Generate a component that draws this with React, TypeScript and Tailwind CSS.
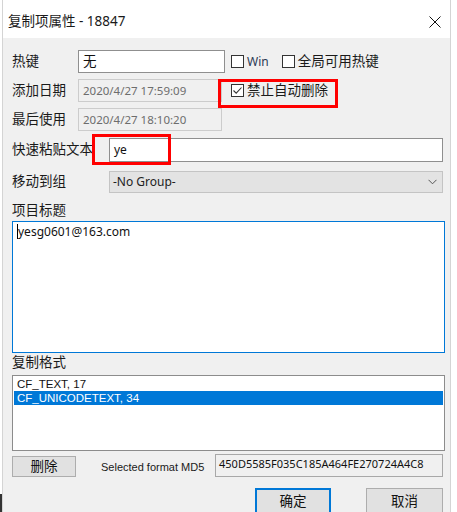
import React from 'react';

const font = { fontFamily: '"Noto Sans", "Noto Sans CJK SC", sans-serif' };

const Check: React.FC<{ checked?: boolean }> = ({ checked }) => (
  <span className="flex h-[13px] w-[13px] shrink-0 items-center justify-center border border-[#333333] bg-white">
    {checked && (
      <svg width="11" height="11" viewBox="0 0 11 11">
        <path d="M1.5 5.5 L4.2 8.2 L9.5 2.5" fill="none" stroke="#333" strokeWidth="1.1" />
      </svg>
    )}
  </span>
);

const Label: React.FC<{ w: string; children: React.ReactNode }> = ({ w, children }) => (
  <span className={`${w} shrink-0 text-[13.5px] leading-none text-[#1a1a1a]`}>{children}</span>
);

export default function App() {
  return (
    <div className="relative h-[512px] w-[457px] overflow-hidden bg-white" style={font}>
      <div className="ml-[2px] flex h-[540px] w-[449px] flex-col border-x border-[#d4d4d4]">
        {/* title bar */}
        <div className="flex h-[38px] shrink-0 items-center justify-between bg-white pl-[5px] pr-[8px] pt-[5px]">
          <span className="text-[13.5px] text-[#1a1a1a]">复制项属性 - 18847</span>
          <svg width="12" height="12" viewBox="0 0 12 12" className="mr-[1px]">
            <path d="M0.5 0.5 L11.5 11.5 M11.5 0.5 L0.5 11.5" stroke="#111" strokeWidth="1" />
          </svg>
        </div>

        <div className="flex flex-1 flex-col bg-[#f0f0f0] pl-[9px] pr-[7px]">
          {/* hotkey */}
          <div className="mt-[12px] flex h-[23px] items-center">
            <Label w="w-[66px]">热键</Label>
            <div className="flex h-[23px] w-[147px] items-center border border-[#8f8f8f] bg-white pl-[4px] text-[13.5px] text-[#111]">
              无
            </div>
            <div className="ml-[6px] flex items-center gap-[3px]">
              <Check />
              <span className="text-[12px] text-[#2b3a55]">Win</span>
            </div>
            <div className="ml-[13px] flex items-center gap-[3px]">
              <Check />
              <span className="text-[13.5px] text-[#1a1a1a]">全局可用热键</span>
            </div>
          </div>

          {/* added date */}
          <div className="mt-[6px] flex h-[23px] items-center">
            <Label w="w-[66px]">添加日期</Label>
            <div className="flex h-[23px] w-[144px] items-center border border-[#cccccc] bg-[#f0f0f0] pl-[4px] text-[11.5px] text-[#6d6d6d]">
              2020/4/27 17:59:09
            </div>
            <div className="ml-[9px] flex items-center gap-[3px]">
              <Check checked />
              <span className="text-[13.5px] text-[#1a1a1a]">禁止自动删除</span>
            </div>
          </div>

          {/* last used */}
          <div className="mt-[6px] flex h-[23px] items-center">
            <Label w="w-[66px]">最后使用</Label>
            <div className="flex h-[23px] w-[144px] items-center border border-[#cccccc] bg-[#f0f0f0] pl-[4px] text-[11.5px] text-[#6d6d6d]">
              2020/4/27 18:10:20
            </div>
          </div>

          {/* quick paste */}
          <div className="mt-[7px] flex h-[24px] items-center">
            <Label w="w-[97px]">快速粘贴文本</Label>
            <div className="flex h-[24px] flex-1 items-center border border-[#8f8f8f] bg-white pl-[4px] text-[12px] text-[#111]">
              ye
            </div>
          </div>

          {/* group */}
          <div className="mt-[9px] flex h-[22px] items-center">
            <Label w="w-[97px]">移动到组</Label>
            <div className="flex h-[22px] flex-1 items-center justify-between border border-[#c4c4c4] bg-[#e3e3e3] pl-[3px] pr-[5px] text-[12px] text-[#222]">
              <span>-No Group-</span>
              <svg width="9" height="6" viewBox="0 0 9 6">
                <path d="M0.5 0.8 L4.5 4.8 L8.5 0.8" fill="none" stroke="#555" strokeWidth="1" />
              </svg>
            </div>
          </div>

          <div className="mt-[9px] h-[16px] text-[13.5px] leading-[16px] text-[#1a1a1a]">项目标题</div>

          {/* title textarea */}
          <div className="mt-[3px] flex h-[132px] w-[433px] items-start border border-[#0078d7] bg-white pl-[4px] pt-[3px]">
            <span className="mt-[-1px] h-[15px] w-[1px] bg-black"></span>
            <span className="text-[12px] leading-[14px] text-[#111]">yesg0601@163.com</span>
          </div>

          <div className="mt-[1px] h-[16px] text-[13.5px] leading-[16px] text-[#1a1a1a]">复制格式</div>

          {/* format list */}
          <div
            className="mt-[5px] flex h-[76px] w-[433px] flex-col border border-[#8c8c8c] bg-white p-[1px] text-[11.5px] leading-[14px]"
            style={{ fontFamily: '"Liberation Sans", sans-serif' }}
          >
            <div className="flex h-[14px] items-center pl-[3px] text-[#111]">CF_TEXT, 17</div>
            <div className="flex h-[14px] items-center bg-[#0078d7] pl-[3px] text-white">CF_UNICODETEXT, 34</div>
          </div>

          {/* delete + md5 */}
          <div className="mt-[3px] flex h-[23px] items-start">
            <button className="mt-[2px] flex h-[21px] w-[64px] items-center justify-center border border-[#adadad] bg-[#e1e1e1] text-[13.5px] text-[#111]">
              删除
            </button>
            <span
              className="ml-[25px] mt-[6px] whitespace-nowrap text-[11px] leading-[14px] text-[#1a1a1a]"
              style={{ fontFamily: '"Liberation Sans", sans-serif' }}
            >
              Selected format MD5
            </span>
            <div className="ml-auto flex h-[23px] w-[228px] items-start whitespace-nowrap border border-[#a8a8a8] bg-[#f0f0f0] pl-[3px] pt-[1px] text-[11px] text-[#111]">
              450D5585F035C185A464FE270724A4C8
            </div>
          </div>

          {/* ok / cancel */}
          <div className="mt-[11px] flex items-start">
            <button className="ml-[243px] flex h-[26px] w-[76px] items-center justify-center border-2 border-[#0078d7] bg-[#e1e1e1] text-[13.5px] text-[#111]">
              确定
            </button>
            <button className="ml-auto flex h-[26px] w-[77px] items-center justify-center border border-[#adadad] bg-[#e1e1e1] text-[13.5px] text-[#111]">
              取消
            </button>
          </div>
        </div>
      </div>

      {/* annotation boxes */}
      <div className="absolute left-[218px] top-[79px] h-[29px] w-[120px] border-[3px] border-[#ff0000]"></div>
      <div className="absolute left-[92px] top-[134px] h-[31px] w-[79px] border-[3px] border-[#ff0000]"></div>
      <div className="absolute left-0 top-[494px] h-[18px] w-[2px] bg-[#333]"></div>
    </div>
  );
}
